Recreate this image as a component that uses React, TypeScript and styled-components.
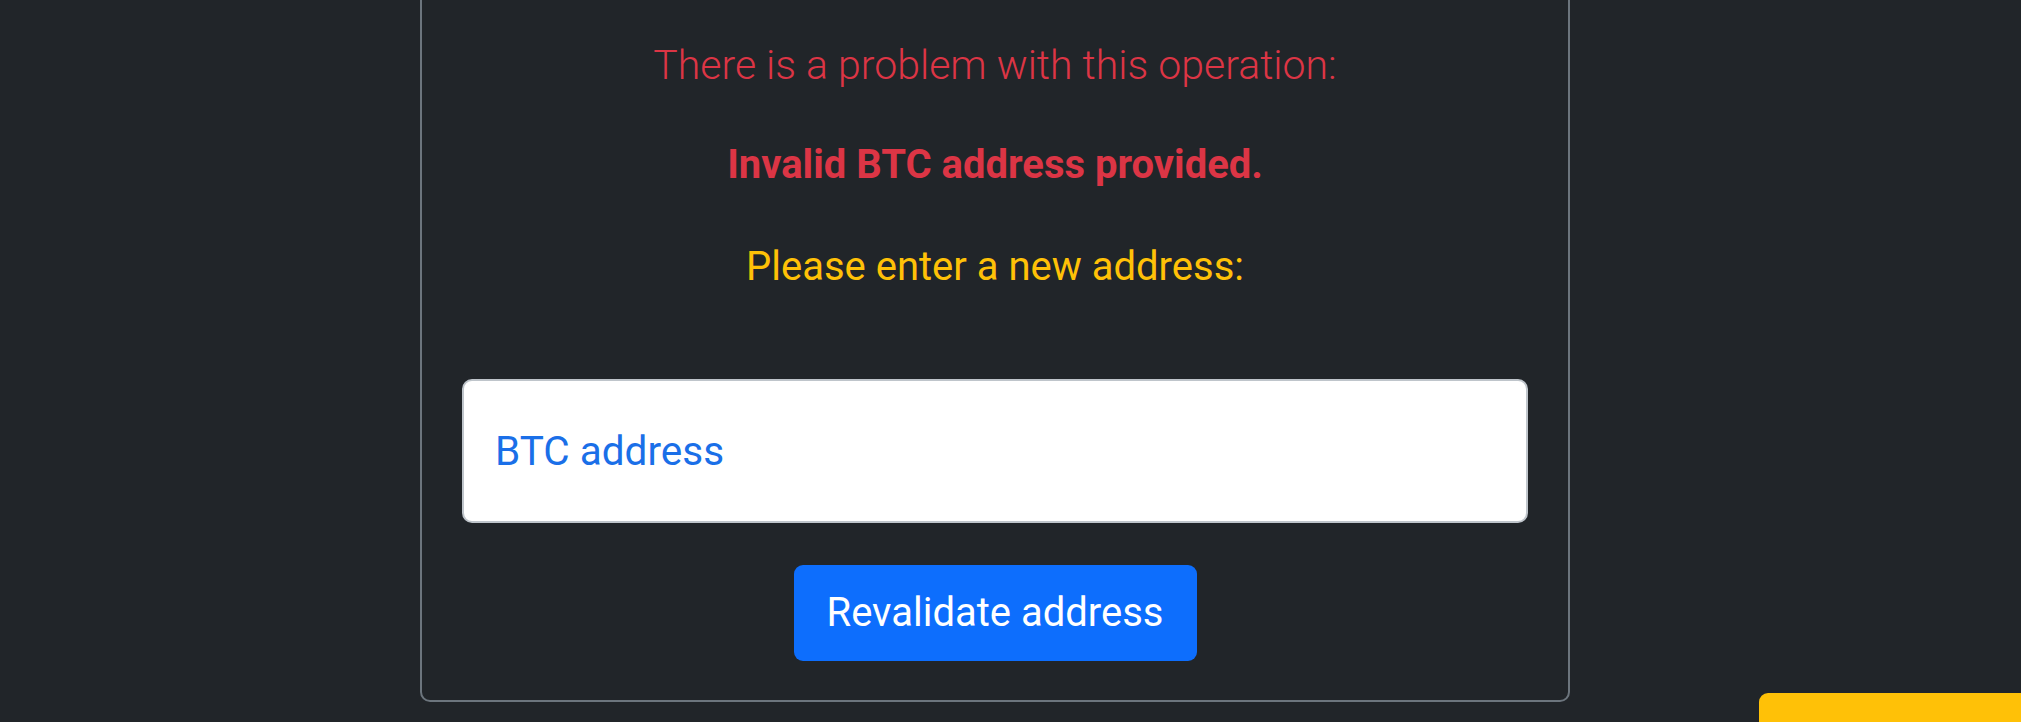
import React from "react";
import styled, { createGlobalStyle } from "styled-components";

const GlobalStyle = createGlobalStyle`
  html, body {
    margin: 0;
    padding: 0;
    background: #212529;
    height: 722px;
    overflow: hidden;
    font-family: Roboto, "Liberation Sans", Arial, sans-serif;
  }
  * { box-sizing: border-box; }
`;

const Page = styled.div`
  display: flex;
  justify-content: flex-start;
  padding-left: 420px;
  height: 722px;
`;

const Card = styled.div`
  width: 1150px;
  margin-top: -42px;
  height: 744px;
  border: 2px solid #6c757d;
  border-radius: 10px;
  padding: 75px 40px 39px;
  display: flex;
  flex-direction: column;
  align-items: center;
`;

const Message = styled.p<{ $tone: "danger" | "warning"; $weight: number; $gap: number; $size: number }>`
  margin: 0 0 ${(p) => p.$gap}px;
  font-size: ${(p) => p.$size}px;
  line-height: 60px;
  font-weight: ${(p) => p.$weight};
  color: ${(p) => (p.$tone === "danger" ? "#dc3545" : "#ffc107")};
  text-align: center;
`;

const AddressInput = styled.input`
  width: 100%;
  height: 144px;
  margin: 0 0 42px;
  padding: 0 31px;
  border: 2px solid #bfc5cb;
  border-radius: 10px;
  background: #fff;
  font-family: Roboto, "Liberation Sans", Arial, sans-serif;
  font-size: 40.5px;
  color: #0d6efd;
  outline: none;

  &::placeholder {
    color: #1a6fe8;
    opacity: 1;
  }
`;

const PrimaryButton = styled.button`
  height: 96px;
  padding: 0 33px;
  border: none;
  border-radius: 9px;
  background: #0d6efd;
  color: #fff;
  font-family: Roboto, "Liberation Sans", Arial, sans-serif;
  font-size: 40px;
  line-height: 60px;
  font-weight: 400;
  cursor: pointer;
`;

const FloatingTab = styled.div`
  position: fixed;
  left: 1759px;
  top: 693px;
  width: 320px;
  height: 80px;
  background: #ffc107;
  border-radius: 9px;
`;

export default function App() {
  return (
    <>
      <GlobalStyle />
      <Page>
        <Card>
          <Message $tone="danger" $weight={300} $gap={40} $size={41}>
            There is a problem with this operation:
          </Message>
          <Message $tone="danger" $weight={700} $gap={42} $size={40}>
            Invalid BTC address provided.
          </Message>
          <Message $tone="warning" $weight={400} $gap={82} $size={40}>
            Please enter a new address:
          </Message>
          <AddressInput type="text" placeholder="BTC address" />
          <PrimaryButton type="button">Revalidate address</PrimaryButton>
        </Card>
      </Page>
      <FloatingTab />
    </>
  );
}
